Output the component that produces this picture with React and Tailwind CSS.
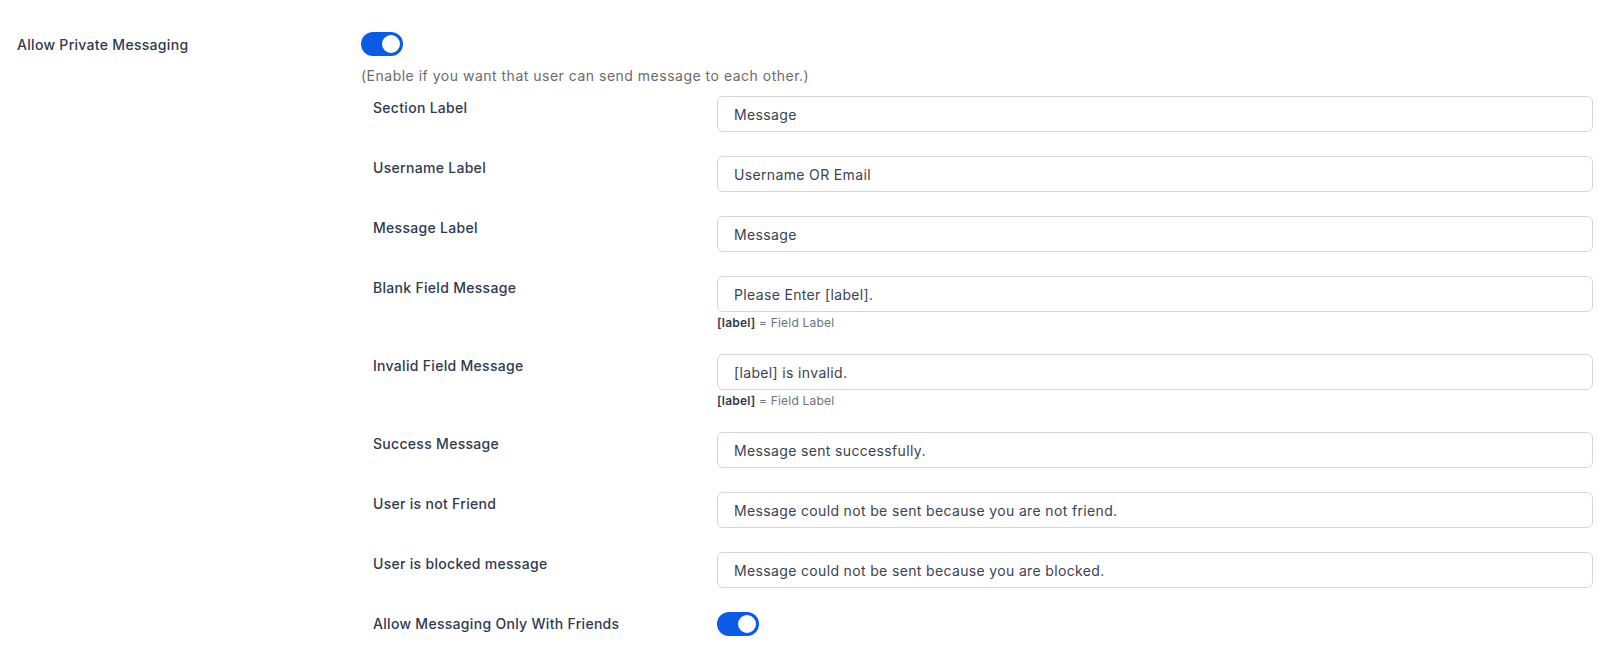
import React, { useState } from 'react';

function Toggle({ on, onChange }) {
  return (
    <button
      type="button"
      onClick={() => onChange(!on)}
      className={`relative inline-flex h-6 w-[42px] shrink-0 items-center rounded-full transition-colors ${
        on ? 'bg-[#0a5ce8]' : 'bg-gray-300'
      }`}
    >
      <span
        className={`inline-block h-[18px] w-[18px] rounded-full bg-white transition-transform ${
          on ? 'translate-x-[21px]' : 'translate-x-[3px]'
        }`}
      />
    </button>
  );
}

function Hint() {
  return (
    <p className="mt-[3px] text-[12px] leading-[15px] tracking-[0.2px] text-[#6b7280]">
      <span className="font-semibold text-[#2f3a4f]">[label]</span> = Field Label
    </p>
  );
}

function Row({ label, value, hint }) {
  const [val, setVal] = useState(value);
  return (
    <div className="mb-[24px] flex pl-3">
      <label className="w-[344px] shrink-0 pt-[2px] text-[14px] font-medium leading-5 tracking-[0.3px] text-[#2f3a4f]">
        {label}
      </label>
      <div className="flex-1">
        <input
          value={val}
          onChange={(e) => setVal(e.target.value)}
          className="h-9 w-full rounded-[6px] border border-[#d3d8e0] bg-white px-4 text-[14px] tracking-[0.35px] text-[#3b4252] outline-none focus:border-[#0a5ce8]"
        />
        {hint && <Hint />}
      </div>
    </div>
  );
}

const fields = [
  { label: 'Section Label', value: 'Message' },
  { label: 'Username Label', value: 'Username OR Email' },
  { label: 'Message Label', value: 'Message' },
  { label: 'Blank Field Message', value: 'Please Enter [label].', hint: true },
  { label: 'Invalid Field Message', value: '[label] is invalid.', hint: true },
  { label: 'Success Message', value: 'Message sent successfully.' },
  { label: 'User is not Friend', value: 'Message could not be sent because you are not friend.' },
  { label: 'User is blocked message', value: 'Message could not be sent because you are blocked.' },
];

export default function App() {
  const [allowPm, setAllowPm] = useState(true);
  const [friendsOnly, setFriendsOnly] = useState(true);

  return (
    <div className="min-h-screen bg-white font-['Inter',sans-serif] text-[#2f3a4f]">
      <div className="flex pl-[17px] pr-5 pt-8">
        <div className="w-[344px] shrink-0 pt-[3px] text-[14px] font-medium leading-5 tracking-[0.3px]">
          Allow Private Messaging
        </div>
        <div className="flex-1">
          <Toggle on={allowPm} onChange={setAllowPm} />
          <p className="mt-[7px] text-[14px] leading-5 tracking-[0.5px] text-[#6b6b6b]">
            (Enable if you want that user can send message to each other.)
          </p>
          <div className="mt-[10px]">
            {fields.map((f) => (
              <Row key={f.label} {...f} />
            ))}
            <div className="flex items-center pl-3">
              <span className="w-[344px] shrink-0 text-[14px] font-medium leading-5 tracking-[0.3px]">
                Allow Messaging Only With Friends
              </span>
              <Toggle on={friendsOnly} onChange={setFriendsOnly} />
            </div>
          </div>
        </div>
      </div>
    </div>
  );
}
